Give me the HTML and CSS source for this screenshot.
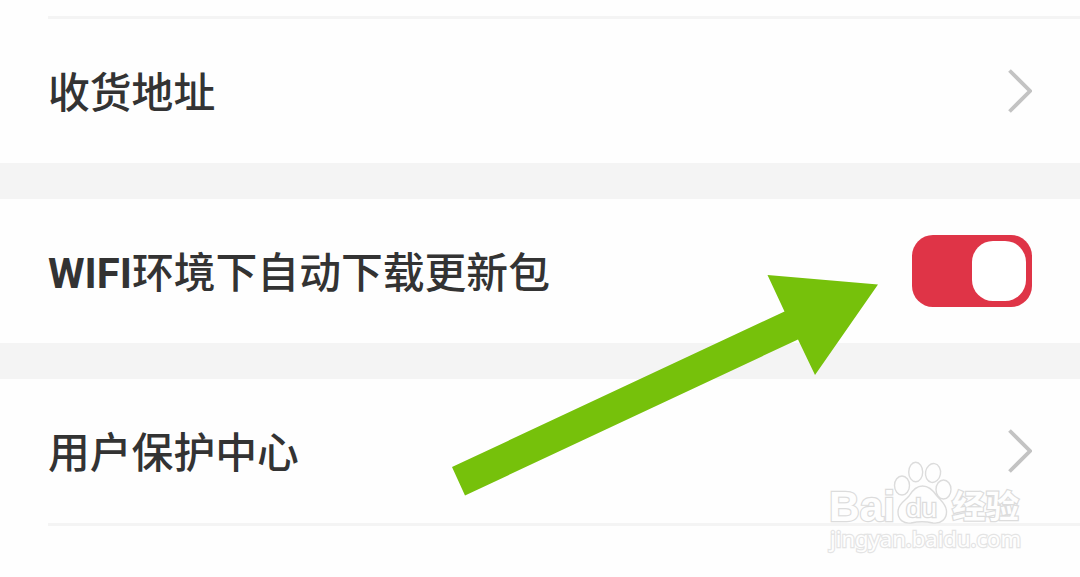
FILE: index.html
```html
<!DOCTYPE html>
<html lang="zh-CN">
  <head>
    <meta charset="UTF-8">
    <meta name="viewport" content="width=device-width, initial-scale=1.0">
    <title>设置</title>
    <link rel="stylesheet" href="styles.css">
  </head>
  <body>
    <main class="settings">
      <div class="line"></div>
      <div class="item">
        <span>收货地址</span>
        <svg class="more" viewBox="0 0 24 44"><path d="M1.5 1.5 L22 22 L1.5 42.5"/></svg>
      </div>
      <div class="gap"></div>
      <div class="item">
        <span><b>WIFI</b>环境下自动下载更新包</span>
        <div class="switch"><i></i></div>
      </div>
      <div class="gap"></div>
      <div class="item">
        <span>用户保护中心</span>
        <svg class="more" viewBox="0 0 24 44"><path d="M1.5 1.5 L22 22 L1.5 42.5"/></svg>
      </div>
      <div class="line"></div>
    </main>
    <svg class="arrow" viewBox="0 0 426 221">
      <path d="M0 192 L332.5 36.5 L315.5 0 L426 9.500 L363 100 L346 64.500 L13 220.500 Z"/>
    </svg>
    <svg class="watermark" viewBox="0 0 200 100">
      <text x="8" y="73.500" class="bai" textLength="66" lengthAdjust="spacingAndGlyphs">Bai</text>
      <ellipse cx="81" cy="38.500" rx="7.500" ry="9.500"/>
      <ellipse cx="94.700" cy="25" rx="7" ry="9.800"/>
      <ellipse cx="112" cy="26" rx="7.500" ry="9.500" transform="rotate(10 112 26)"/>
      <ellipse cx="122.500" cy="42.500" rx="7.500" ry="9.500"/>
      <path d="M101.500 39 C95 39 91 44 88 49 C84 54 77 57 77 65 C77 73 83 77 90 76 C97 74.500 105 74.500 112 76 C120 77 126 72 125.500 64 C125 57 120 54 116 49 C112 43 108 39 101.500 39 Z"/>
      <text x="85" y="69.500" class="du" textLength="31" lengthAdjust="spacingAndGlyphs">du</text>
      <text x="131" y="71" class="jingyan" textLength="67" lengthAdjust="spacingAndGlyphs">经验</text>
      <text x="9" y="100" class="url" textLength="191" lengthAdjust="spacingAndGlyphs">jingyan.baidu.com</text>
    </svg>
  </body>
</html>
```

FILE: styles.css
```css
body {
  margin: 0;
  height: 577px;
  position: relative;
  overflow: hidden;
  background: #fefefe;
  color: #333;
  font-family: Roboto, "Noto Sans CJK SC", sans-serif;
}
.settings {
  padding-top: 16px;
}
.line {
  height: 3px;
  margin-left: 48px;
  background: #f4f4f4;
}
.gap {
  height: 36px;
  background: #f4f4f4;
}
.item {
  display: flex;
  justify-content: space-between;
  align-items: center;
  height: 144px;
  padding: 0 48px;
  font-size: 41.8px;
  font-weight: 500;
  line-height: 60px;
}
.item span {
  padding-top: 6px;
}
.item b {
  font-weight: 700;
}
.more {
  width: 24px;
  height: 44px;
  fill: none;
  stroke: #c3c3c3;
  stroke-width: 3.8;
}
.switch {
  display: flex;
  justify-content: flex-end;
  box-sizing: border-box;
  width: 120px;
  height: 72px;
  padding: 6px;
  border-radius: 21px;
  background: #df3447;
}
.switch i {
  width: 54px;
  height: 60px;
  border-radius: 21px;
  background: #fff;
}
.arrow {
  position: absolute;
  left: 452px;
  top: 275px;
  width: 426px;
  height: 221px;
  fill: #76c10b;
}
.watermark {
  position: absolute;
  left: 821px;
  top: 447px;
  width: 200px;
  height: 100px;
  overflow: visible;
  fill: #fefefe;
  stroke: #dcdcdc;
  stroke-width: 1.4;
}
.watermark text {
  font-family: "Liberation Sans", "Noto Sans CJK SC", sans-serif;
  paint-order: stroke;
  stroke-width: 2.4;
}
.watermark .bai {
  font-size: 43px;
  font-weight: 700;
}
.watermark .du {
  font-size: 25px;
}
.watermark .jingyan {
  font-size: 32px;
  font-weight: 700;
}
.watermark .url {
  font-family: "Noto Sans", sans-serif;
  font-size: 22px;
  stroke: #e4e4e4;
}
```
